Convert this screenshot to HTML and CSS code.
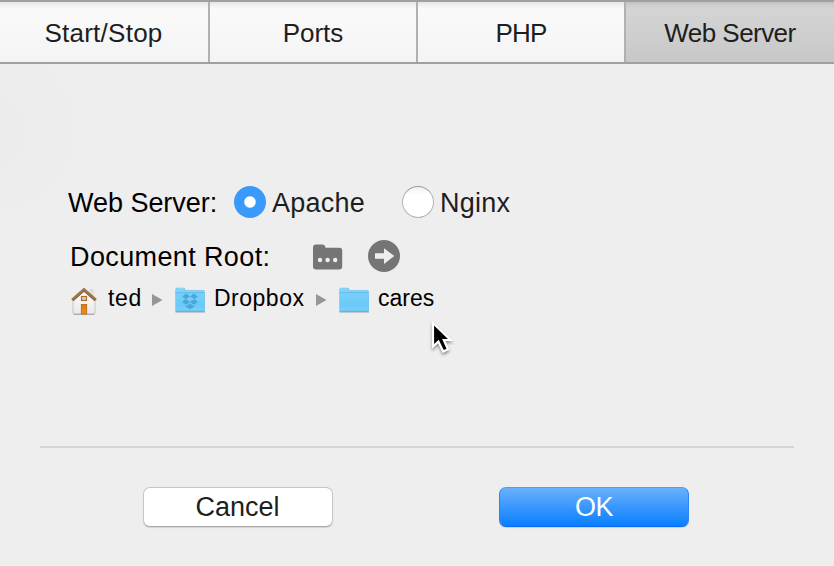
FILE: index.html
```html
<!DOCTYPE html>
<html lang="en">
<head>
<meta charset="utf-8">
<title>Web Server</title>
<link rel="stylesheet" href="styles.css">
</head>
<body>
<nav class="tabs">
  <div class="tab"><span class="t-start">Start/Stop</span></div>
  <div class="tab"><span class="t-ports">Ports</span></div>
  <div class="tab"><span class="t-php">PHP</span></div>
  <div class="tab active"><span class="t-web">Web Server</span></div>
</nav>
<main class="panel">
  <div class="row server">
    <span class="label">Web Server:</span>
    <span class="radio on"></span><span class="opt apache">Apache</span>
    <span class="radio"></span><span class="opt nginx">Nginx</span>
  </div>
  <div class="row root">
    <span class="label">Document Root:</span>
    <svg class="choose" width="30" height="26" viewBox="0 0 30 26">
      <path d="M0 3.500Q0 .5 3 .5H9.500Q11.500 .5 12 2.200L12.600 3.700H26.500Q29.200 3.700 29.200 6.500V22.500Q29.200 25.500 26.200 25.500H3Q0 25.500 0 22.500Z" fill="#757575"/>
      <g fill="#eee"><circle cx="7" cy="16" r="2.200"/><circle cx="14.600" cy="16" r="2.200"/><circle cx="22.200" cy="16" r="2.200"/></g>
    </svg>
    <svg class="go" width="32" height="32" viewBox="0 0 32 32">
      <circle cx="16" cy="16" r="16" fill="#757575"/>
      <path d="M7 13.200H16V8.200L26.300 16L16 24V18.800H7Z" fill="#eee"/>
    </svg>
  </div>
  <div class="row path">
    <svg class="house" width="28" height="30" viewBox="0 0 28 30">
      <defs>
        <linearGradient id="wall" x2="0" y2="1"><stop offset="0" stop-color="#fff"/><stop offset="1" stop-color="#e9e9eb"/></linearGradient>
        <linearGradient id="door" x2="0" y2="1"><stop offset="0" stop-color="#d97a12"/><stop offset="1" stop-color="#f78f0c"/></linearGradient>
      </defs>
      <path d="M20 4h3v7l-3-2.500z" fill="#e9e9e9" stroke="#c9c9c9" stroke-width=".7"/>
      <path d="M3 13.500L14 4L25 13.500V27Q25 28 24 28H4Q3 28 3 27Z" fill="url(#wall)" stroke="#bbb" stroke-width=".8"/>
      <path d="M3.500 28.300h21" stroke="#a5a5a5" stroke-width="1"/>
      <path d="M2.300 14.100L14 3.900L25.700 14.100" fill="none" stroke="#805f39" stroke-width="3.200"/>
      <path d="M2.300 13.500L14 3.300L25.700 13.500" fill="none" stroke="#a17b4c" stroke-width="1.800"/>
      <rect x="11.500" y="10.500" width="5" height="4" fill="#b9d2ee" stroke="#b96a24" stroke-width="1.200"/>
      <rect x="11.300" y="18.500" width="5.400" height="9.500" fill="url(#door)" stroke="#b9640e" stroke-width=".8"/>
    </svg>
    <span class="crumb ted">ted</span>
    <svg class="sep" width="11" height="12" viewBox="0 0 11 12"><path d="M0 0L10.500 6L0 12Z" fill="#969696"/></svg>
    <svg class="folder" width="31" height="27" viewBox="0 0 31 27">
      <defs><linearGradient id="fold" x2="0" y2="1"><stop offset="0" stop-color="#79d1fb"/><stop offset=".7" stop-color="#69c9f8"/><stop offset="1" stop-color="#7cd1fa"/></linearGradient></defs>
      <path d="M.5 25h29.500" stroke="#b5b9bc" stroke-width="1.500"/>
      <path d="M.4 2.500Q.4 .7 2 .7H8.300Q9.500 .7 10 2L10.700 3.200H28.300Q29.900 3.200 29.900 5V24.400H.4Z" fill="#66bde8"/>
      <path d="M.8 2.800Q.8 1.100 2.300 1.100H8.100Q9 1.100 9.600 2.400L10.300 3.700H28.200Q29.500 3.700 29.500 5V6H.8Z" fill="#82d3f9"/>
      <rect x=".8" y="6" width="28.700" height="18" fill="url(#fold)"/>
      <path d="M.8 5.700H29.500" stroke="#59b6e3" stroke-width=".8"/>
      <path d="M.8 24.200H29.500" stroke="#4aa7d7" stroke-width=".8"/>
      <g fill="#48a8d9"><path d="M11.300 6.600L15 9.400L10.600 12.100L7 9.400ZM18.700 6.600L23 9.400L19.400 12.100L15 9.400ZM7 15L10.600 12.100L15 14.900L11.300 17.700ZM23 15L19.400 12.100L15 14.900L18.700 17.700ZM10.500 18.200L11.700 18.900L15 16.200L18.300 18.900L19.500 18.200V19.500L15 22.200L10.500 19.500Z"/></g>
    </svg>
    <span class="crumb dropbox">Dropbox</span>
    <svg class="sep" width="11" height="12" viewBox="0 0 11 12"><path d="M0 0L10.500 6L0 12Z" fill="#969696"/></svg>
    <svg class="folder" width="31" height="27" viewBox="0 0 31 27">
      <path d="M.5 25h29.500" stroke="#b5b9bc" stroke-width="1.500"/>
      <path d="M.4 2.500Q.4 .7 2 .7H8.300Q9.500 .7 10 2L10.700 3.200H28.300Q29.900 3.200 29.900 5V24.400H.4Z" fill="#66bde8"/>
      <path d="M.8 2.800Q.8 1.100 2.300 1.100H8.100Q9 1.100 9.600 2.400L10.300 3.700H28.200Q29.500 3.700 29.500 5V6H.8Z" fill="#82d3f9"/>
      <rect x=".8" y="6" width="28.700" height="18" fill="url(#fold)"/>
      <path d="M.8 5.700H29.500" stroke="#59b6e3" stroke-width=".8"/>
      <path d="M.8 24.200H29.500" stroke="#4aa7d7" stroke-width=".8"/>
    </svg>
    <span class="crumb cares">cares</span>
  </div>
  <hr class="rule">
  <div class="buttons">
    <button class="btn"><span class="t-cancel">Cancel</span></button>
    <button class="btn primary"><span class="t-ok">OK</span></button>
  </div>
</main>
<svg class="cursor" width="28" height="40" viewBox="0 0 28 40">
  <path d="M4 5V28.500L9.400 23.500L14.200 33.500L19 31.200L14.800 22H21.500Z" fill="#000" stroke="#fff" stroke-width="2.200"/>
</svg>
</body>
</html>
```
FILE: styles.css
```css
* { box-sizing: border-box; }
body {
  margin: 0;
  width: 834px;
  height: 566px;
  overflow: hidden;
  background: radial-gradient(circle at -10px 130px, #ebebeb 0, #eee 110px);
  font: 27px/30px "Liberation Sans", Arial, sans-serif;
  color: #000;
  white-space: nowrap;
}
.tabs {
  display: grid;
  grid-template-columns: 210px 208px 208px 208px;
  height: 64px;
  border-top: 2px solid #a0a0a0;
  border-bottom: 2px solid #a0a0a0;
  color: #1e1e1e;
  font-size: 26px;
}
.tab {
  display: flex;
  justify-content: center;
  padding-top: 16px;
  border-right: 2px solid #b1b1b1;
  background: linear-gradient(#e6e6e6 0, #f0f0f0 3px, #fafafa 7px, #f4f4f4 100%);
}
.tab.active {
  border-right: 0;
  background: linear-gradient(#c2c2c2 0, #cdcdcd 3px, #d4d4d4 7px, #c8c8c8 100%);
}
.t-start { letter-spacing: .25px; margin-right: 1px; }
.t-php { letter-spacing: -.8px; }
.t-web { letter-spacing: -.55px; }
.panel { padding-top: 122px; }
.row { display: flex; align-items: center; }
.label, .opt, .crumb { flex: none; }
.server { height: 32px; padding-left: 68px; }
.server .label { width: 166px; letter-spacing: -.03px; }
.server .label, .opt, .root .label { padding-top: 1px; }
.radio {
  flex: none;
  width: 32px;
  height: 32px;
  border: 1px solid #b4b4b4;
  border-top-color: #999;
  border-radius: 50%;
  background: linear-gradient(#f0f0f0 0, #fff 7px);
}
.radio.on {
  border: 0;
  background: radial-gradient(circle, #fff 5.200px, #3b99fc 6.200px);
}
.opt { color: #1e1e1e; padding-left: 6px; }
.apache { width: 136px; letter-spacing: .25px; }
.nginx { letter-spacing: .25px; }
.root { height: 32px; margin-top: 22px; padding-left: 70px; }
.root .label { width: 243px; letter-spacing: .38px; }
.choose { margin-right: 25px; margin-top: 2px; }
.path {
  height: 32px;
  margin-top: 13px;
  padding-left: 70px;
  font-size: 23px;
  line-height: 28px;
}
.house { margin-right: 10px; }
.crumb { margin-top: -7px; }
.ted { width: 44px; letter-spacing: .6px; }
.sep { margin-right: 12px; margin-top: -2px; }
.dropbox { width: 102px; letter-spacing: .5px; }
.folder { margin-right: 8px; margin-top: -1px; }
.rule { height: 2px; margin: 129px 40px 0; border: 0; background: #d5d5d5; }
.buttons { display: flex; gap: 166px; margin: 39px 0 0 143px; }
.btn {
  width: 190px;
  height: 40px;
  padding: 0;
  border: 1px solid #c6c6c6;
  border-bottom-color: #aaa;
  border-radius: 7px;
  background: #fff;
  box-shadow: 0 1px 1px rgba(0, 0, 0, .12);
  color: #1e1e1e;
  font: inherit;
}
.t-cancel { margin-right: 1px; }
.t-ok { letter-spacing: -.5px; }
.btn.primary {
  border-color: #4f9df5 #2b83f6 #0869f3;
  background: linear-gradient(#6bb2fb, #077dff);
  background-origin: border-box;
  color: #fff;
}
.cursor {
  position: absolute;
  left: 429px;
  top: 318px;
  filter: drop-shadow(0 2px 1.500px rgba(0, 0, 0, .4));
}
```
